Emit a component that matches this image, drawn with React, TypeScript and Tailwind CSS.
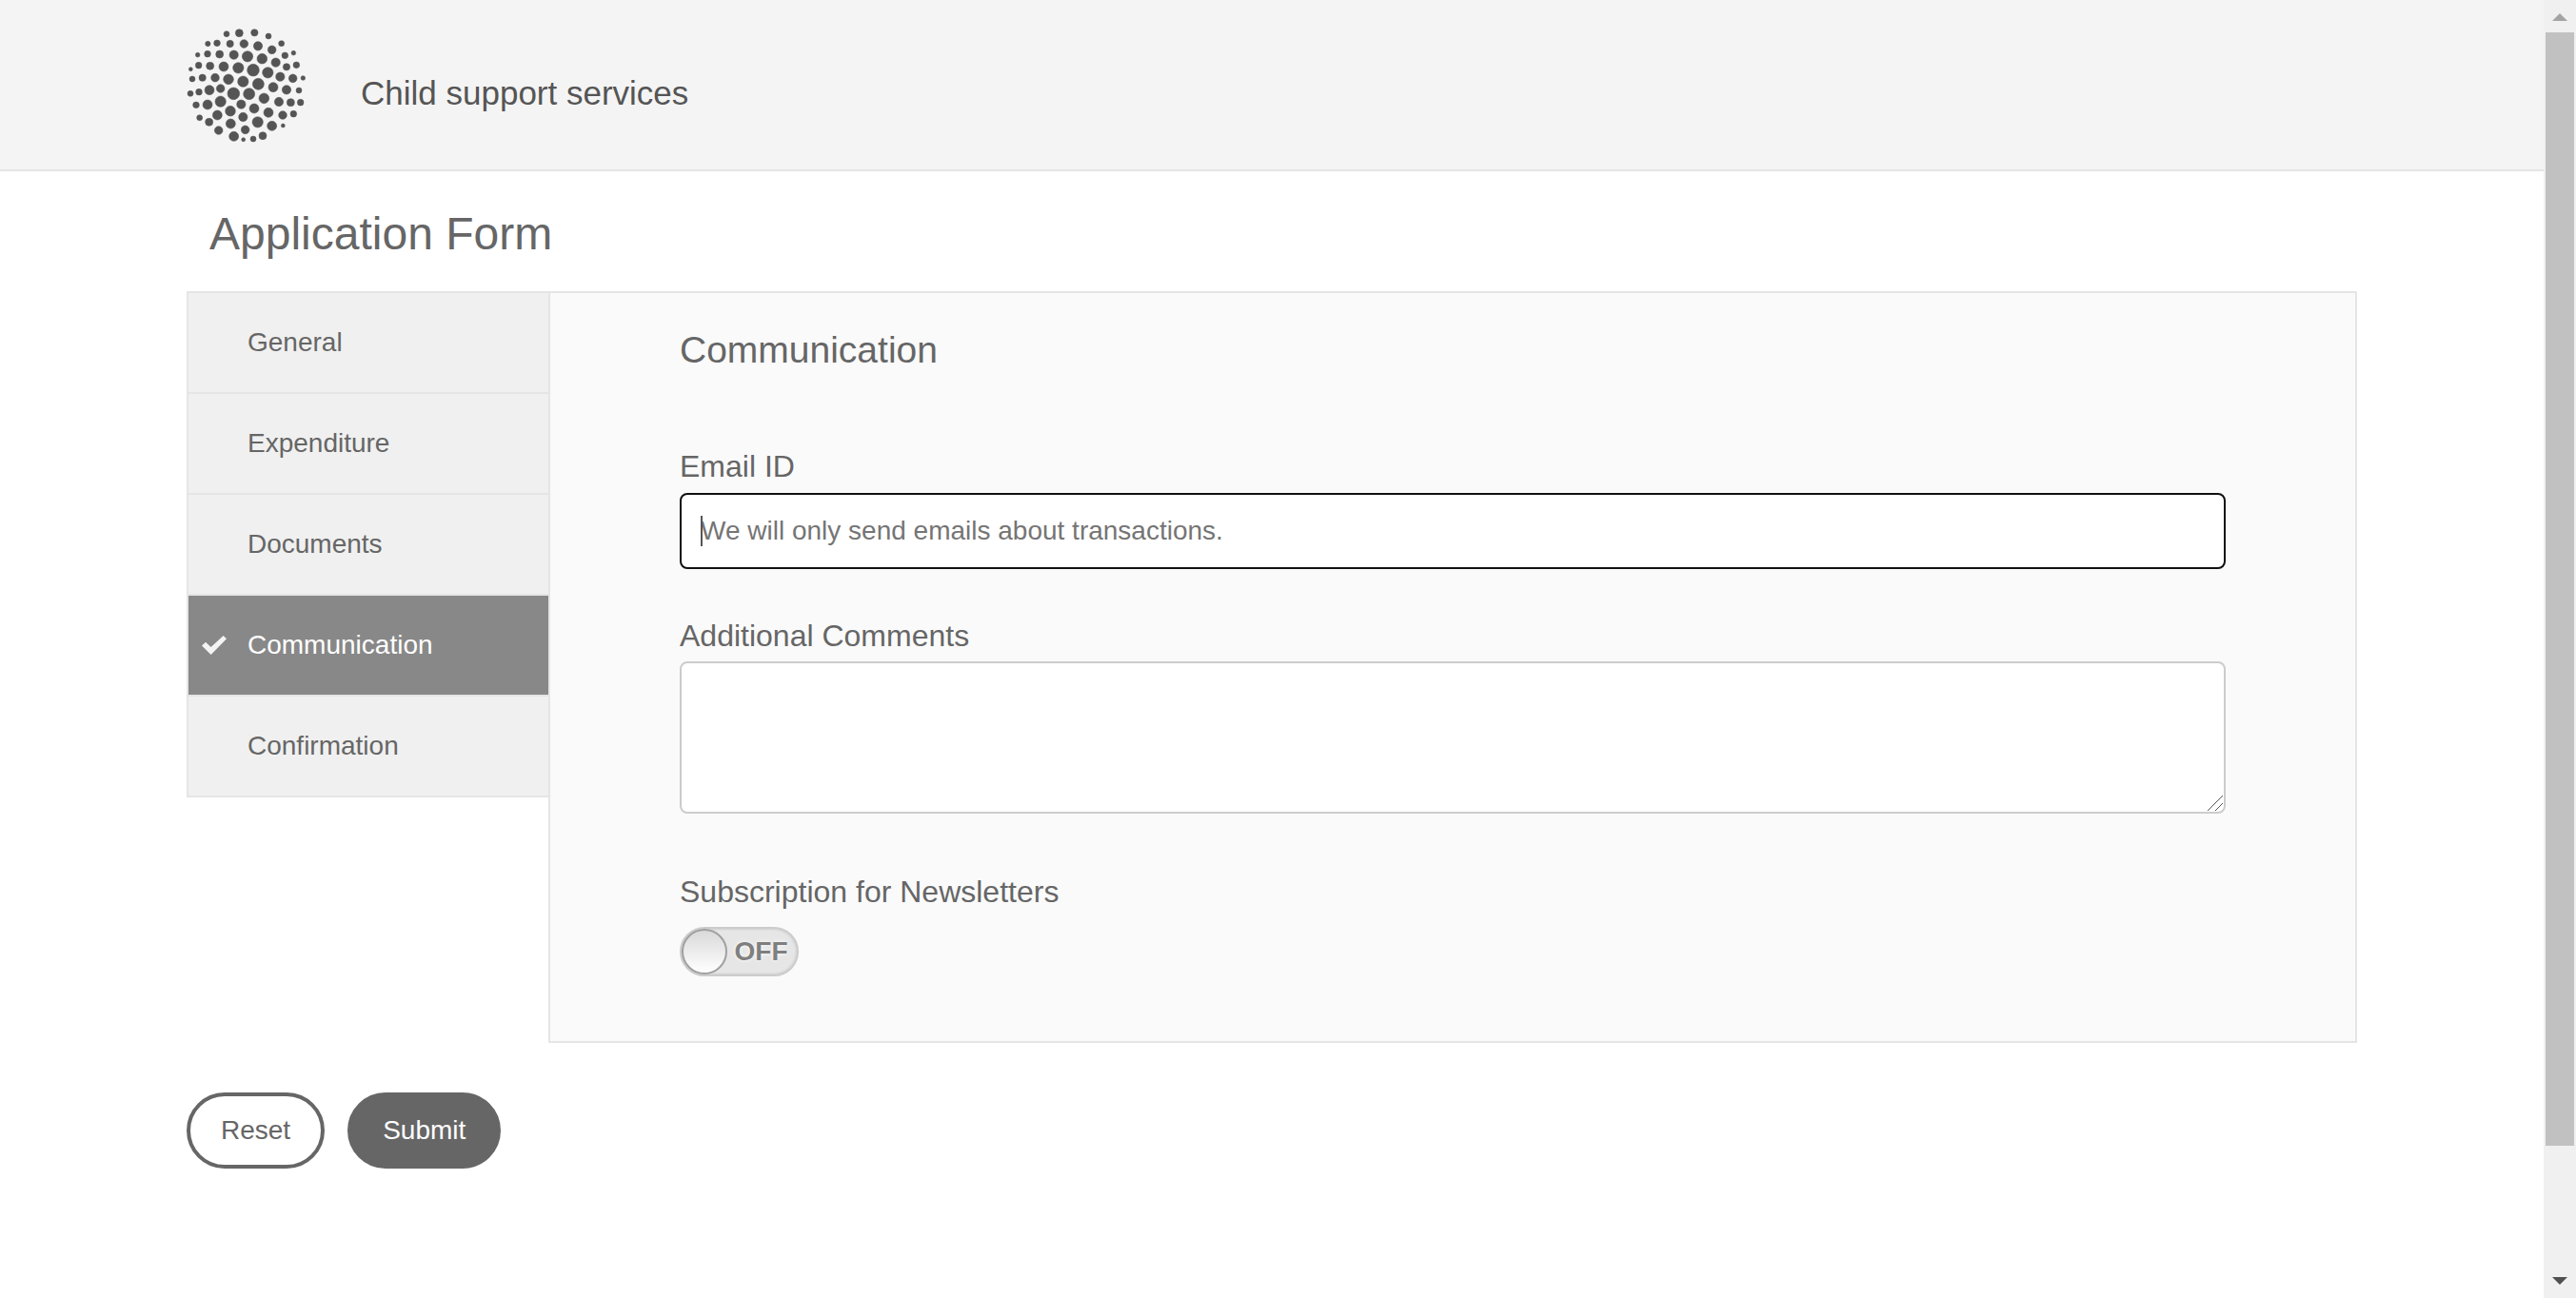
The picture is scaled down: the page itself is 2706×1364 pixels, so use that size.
import React, { useState } from "react";

// Dots of the emblem: centre x, centre y, radius.
const dots: [number, number, number][] = [
  [174, 77, 9], [214, 74, 12], [262, 73, 11], [306, 84, 9],
  [115, 108, 8], [144, 106, 10], [185, 108, 11], [229, 108, 13], [273, 115, 14], [317, 127, 13], [347, 107, 9], [385, 137, 7],
  [83, 143, 7], [114, 140, 10], [152, 141, 12], [197, 143, 14], [240, 148, 17], [286, 155, 16], [329, 167, 14], [358, 145, 10],
  [61, 188, 6], [86, 176, 10], [122, 178, 12], [165, 180, 15], [211, 184, 17], [258, 191, 19], [304, 199, 17], [343, 212, 14], [363, 181, 11], [394, 175, 10],
  [66, 219, 9], [98, 215, 11], [138, 215, 13], [180, 220, 16], [226, 227, 17], [274, 235, 18], [321, 245, 15], [383, 217, 13], [415, 216, 7],
  [60, 265, 9], [87, 260, 10], [120, 254, 15], [155, 249, 13], [196, 265, 19], [245, 266, 18], [292, 280, 16], [363, 253, 14], [402, 255, 9],
  [78, 301, 10], [114, 300, 15], [155, 290, 17], [220, 299, 14], [339, 291, 14], [376, 293, 12], [407, 293, 10],
  [89, 341, 9], [145, 333, 15], [186, 320, 16], [261, 312, 15], [306, 325, 15], [351, 333, 13], [385, 329, 10],
  [119, 355, 12], [187, 360, 15], [226, 339, 14], [272, 355, 17], [317, 367, 15], [352, 366, 6],
  [149, 381, 13], [197, 400, 15], [233, 379, 13], [288, 398, 12], [227, 410, 6], [258, 408, 9],
];

const tabs = ["General", "Expenditure", "Documents", "Communication", "Confirmation"];

function Logo() {
  return (
    <svg viewBox="48 54 378 372" className="h-[124px] w-[126px] shrink-0" fill="#555555" stroke="#555555" strokeWidth="1.6" role="img" aria-label="Logo">
      {dots.map(([cx, cy, r], i) => (
        <circle key={i} cx={cx} cy={cy} r={r} />
      ))}
    </svg>
  );
}

function Scrollbar() {
  return (
    <div aria-hidden="true" className="flex h-full w-[34px] shrink-0 flex-col bg-[#f0f0f0]">
      <div className="flex h-[34px] items-center justify-center pt-[2px]">
        <svg viewBox="0 0 16 8" className="h-2 w-4" fill="#a3a3a3"><path d="M0 8L8 0L16 8Z" /></svg>
      </div>
      <div className="flex flex-1 flex-col px-[2px]">
        <div className="grow-[65] bg-[#c1c1c1]" />
        <div className="grow-[7]" />
      </div>
      <div className="flex h-[34px] items-center justify-center pb-[2px]">
        <svg viewBox="0 0 16 8" className="h-2 w-4" fill="#505050"><path d="M0 0L8 8L16 0Z" /></svg>
      </div>
    </div>
  );
}

function Tabs({ active, onSelect }: { active: string; onSelect: (t: string) => void }) {
  return (
    <nav className="-mr-[2px] w-[382px] shrink-0 self-start border-2 border-[#e5e5e5]" aria-label="Form sections">
      <ul className="divide-y-2 divide-[#e5e5e5]">
        {tabs.map((t) => (
          <li key={t}>
            <button
              type="button"
              onClick={() => onSelect(t)}
              aria-current={t === active ? "step" : undefined}
              className={
                t === active
                  ? "flex h-[104px] w-full items-center bg-[#888888] pl-[14px] text-left text-white"
                  : "flex h-[104px] w-full items-center bg-[#f0f0f0] pl-[14px] text-left text-[#666666]"
              }
            >
              <span className="w-12 shrink-0">
                {t === active && (
                  <svg viewBox="0 0 26 20" className="h-5 w-[26px]" fill="#f4f4f4" aria-hidden="true">
                    <path d="M0 10.5L4 6.7L9.6 12.1L22.6 0L26 3.3L9.6 20Z" />
                  </svg>
                )}
              </span>
              {t}
            </button>
          </li>
        ))}
      </ul>
    </nav>
  );
}

export default function App() {
  const [active, setActive] = useState("Communication");
  const [subscribed, setSubscribed] = useState(false);
  const [email, setEmail] = useState("");
  return (
    <div className="flex h-screen bg-white font-['Liberation_Sans',Arial,sans-serif] text-[28px] leading-8 text-[#666666]">
      <div className="min-w-0 flex-1 overflow-hidden">
        <header className="border-b-2 border-[#e5e5e5] bg-[#f4f4f4]">
          <div className="mx-auto flex max-w-[2280px] items-start gap-[57px] pt-7 pb-[26px]">
            <Logo />
            <div className="pt-[50px] text-[35px] leading-10 text-[#555555]">Child support services</div>
          </div>
        </header>
        <main className="mx-auto max-w-[2280px]">
          <h1 className="px-6 pt-9 pb-[30px] text-[48px] leading-[60px]">Application Form</h1>
          <form onSubmit={(e) => e.preventDefault()} onReset={() => { setEmail(""); setSubscribed(false); }}>
            <div className="flex">
              <Tabs active={active} onSelect={setActive} />
              <section className="min-w-0 flex-1 border-2 border-[#e5e5e5] bg-[#fafafa] px-[136px] pt-9 pb-[68px]">
                <h2 className="text-[39px] leading-[48px]">Communication</h2>
                <div className="pt-[78px]">
                  <label htmlFor="email" className="block pb-2 text-[32px] leading-10">Email ID</label>
                  <div className="relative">
                    <input
                      id="email"
                      type="email"
                      value={email}
                      onChange={(e) => setEmail(e.target.value)}
                      placeholder="We will only send emails about transactions."
                      className="block h-20 w-full rounded-lg border-2 border-[#101010] bg-white px-5 outline-none placeholder:text-[#757575]"
                    />
                    {email === "" && <span aria-hidden="true" className="absolute top-6 left-[22px] h-8 w-[2px] bg-[#555555]" />}
                  </div>
                </div>
                <div className="pt-[50px]">
                  <label htmlFor="comments" className="block pb-[7px] text-[32px] leading-10">Additional Comments</label>
                  <div className="relative">
                    <textarea id="comments" className="block h-40 w-full resize-none rounded-lg border-2 border-[#cccccc] bg-white p-5 outline-none" />
                    <svg aria-hidden="true" viewBox="0 0 16 16" className="pointer-events-none absolute right-[3px] bottom-[3px] h-4 w-4" fill="none" stroke="#555555">
                      <path d="M0 16L16 0M8 16L16 8" />
                    </svg>
                  </div>
                </div>
                <div className="pt-[62px]">
                  <label htmlFor="newsletter" className="block pb-[17px] text-[32px] leading-10">Subscription for Newsletters</label>
                  <label className="relative flex h-[52px] w-[125px] items-center rounded-full border-2 border-[#cccccc] bg-[#e6e6e6] font-bold text-[#7f7f7f] shadow-[inset_0_0_2px_1px_#d0d0d0]">
                    <input
                      id="newsletter"
                      type="checkbox"
                      role="switch"
                      checked={subscribed}
                      onChange={(e) => setSubscribed(e.target.checked)}
                      className="peer absolute inset-0 appearance-none rounded-full"
                    />
                    <span className="h-12 w-12 shrink-0 rounded-full border-2 border-[#a0a0a0] bg-linear-to-b from-[#d9d9d9] to-white peer-checked:order-last" />
                    <span className="flex-1 pr-[2px] text-center [text-shadow:0_0_4px_#ffffff]">{subscribed ? "ON" : "OFF"}</span>
                  </label>
                </div>
              </section>
            </div>
            <div className="flex gap-6 pt-[52px]">
              <button type="reset" className="h-20 rounded-full border-4 border-[#666666] bg-white px-8">Reset</button>
              <button type="submit" className="h-20 rounded-full border-4 border-[#666666] bg-[#666666] px-[33px] text-white">Submit</button>
            </div>
          </form>
        </main>
      </div>
      <Scrollbar />
    </div>
  );
}
